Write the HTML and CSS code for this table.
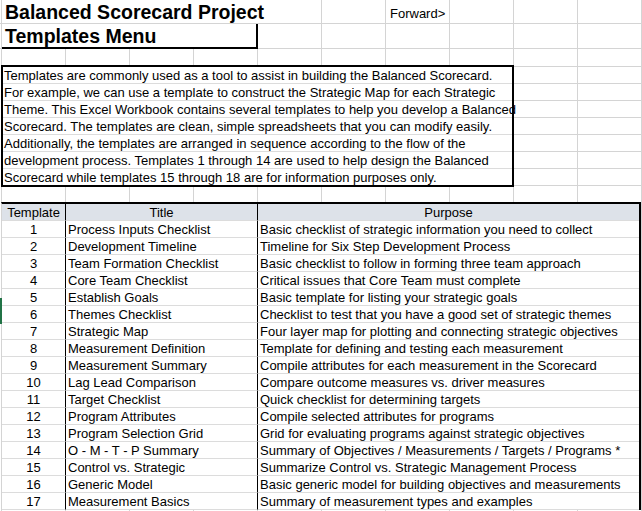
FILE: index.html
```html
<!DOCTYPE html>
<html>
<head>
<meta charset="utf-8">
<link rel="stylesheet" href="styles.css">
</head>
<body>
<div class="sheet">
  <div class="row r1">
    <div class="title-cell">Balanced Scorecard Project</div>
    <div class="fwd">Forward&gt;</div>
  </div>
  <div class="row r2">
    <div class="menu-cell">Templates Menu</div>
  </div>
  <div class="row r3"></div>
  <div class="intro">
    <div class="box">
      <div class="line">Templates are commonly used as a tool to assist in building the Balanced Scorecard.</div>
      <div class="line">For example, we can use a template to construct the Strategic Map for each Strategic</div>
      <div class="line">Theme. This Excel Workbook contains several templates to help you develop a Balanced</div>
      <div class="line">Scorecard. The templates are clean, simple spreadsheets that you can modify easily.</div>
      <div class="line">Additionally, the templates are arranged in sequence according to the flow of the</div>
      <div class="line">development process. Templates 1 through 14 are used to help design the Balanced</div>
      <div class="line">Scorecard while templates 15 through 18 are for information purposes only.</div>
    </div>
    <div class="side"></div>
  </div>
  <div class="row blank"></div>
  <div class="table">
    <div class="c num head">Template</div><div class="c ttl head">Title</div><div class="c pur head">Purpose</div>
    <div class="c num">1</div><div class="c ttl">Process Inputs Checklist</div><div class="c pur">Basic checklist of strategic information you need to collect</div>
    <div class="c num">2</div><div class="c ttl">Development Timeline</div><div class="c pur">Timeline for Six Step Development Process</div>
    <div class="c num">3</div><div class="c ttl">Team Formation Checklist</div><div class="c pur">Basic checklist to follow in forming three team approach</div>
    <div class="c num">4</div><div class="c ttl">Core Team Checklist</div><div class="c pur">Critical issues that Core Team must complete</div>
    <div class="c num">5</div><div class="c ttl">Establish Goals</div><div class="c pur">Basic template for listing your strategic goals</div>
    <div class="c num">6</div><div class="c ttl">Themes Checklist</div><div class="c pur">Checklist to test that you have a good set of strategic themes</div>
    <div class="c num">7</div><div class="c ttl">Strategic Map</div><div class="c pur">Four layer map for plotting and connecting strategic objectives</div>
    <div class="c num">8</div><div class="c ttl">Measurement Definition</div><div class="c pur">Template for defining and testing each measurement</div>
    <div class="c num">9</div><div class="c ttl">Measurement Summary</div><div class="c pur">Compile attributes for each measurement in the Scorecard</div>
    <div class="c num">10</div><div class="c ttl">Lag Lead Comparison</div><div class="c pur">Compare outcome measures vs. driver measures</div>
    <div class="c num">11</div><div class="c ttl">Target Checklist</div><div class="c pur">Quick checklist for determining targets</div>
    <div class="c num">12</div><div class="c ttl">Program Attributes</div><div class="c pur">Compile selected attributes for programs</div>
    <div class="c num">13</div><div class="c ttl">Program Selection Grid</div><div class="c pur">Grid for evaluating programs against strategic objectives</div>
    <div class="c num">14</div><div class="c ttl">O - M - T - P Summary</div><div class="c pur">Summary of Objectives / Measurements / Targets / Programs *</div>
    <div class="c num">15</div><div class="c ttl">Control vs. Strategic</div><div class="c pur">Summarize Control vs. Strategic Management Process</div>
    <div class="c num">16</div><div class="c ttl">Generic Model</div><div class="c pur">Basic generic model for building objectives and measurements</div>
    <div class="c num">17</div><div class="c ttl">Measurement Basics</div><div class="c pur">Summary of measurement types and examples</div>
  </div>
  <div class="row-marker"></div>
</div>
</body>
</html>
```
FILE: styles.css
```css
html, body {
  margin: 0;
  padding: 0;
  background: #fff;
}
body {
  font-family: "Liberation Sans", Arial, sans-serif;
  font-size: 13px;
  color: #000;
  overflow: hidden;
}
.sheet {
  position: relative;
  width: 642px;
  height: 511px;
  overflow: hidden;
  background-color: #fff;
  background-image: linear-gradient(to right, #d4d4d4 1px, transparent 1px);
  background-size: 64px 100%;
  background-position: 1px 0;
}
.row {
  display: flex;
  box-sizing: border-box;
  border-bottom: 1px solid #d4d4d4;
}
.r1 {
  height: 24px;
}
.title-cell {
  margin-left: 2px;
  width: 319px;
  height: 23px;
  background: #fff;
  font-weight: bold;
  font-size: 19.5px;
  line-height: 25px;
  padding-left: 3px;
  box-sizing: border-box;
  white-space: nowrap;
  overflow: hidden;
}
.fwd {
  margin-left: 67px;
  padding-left: 2px;
  padding-top: 3px;
  box-sizing: border-box;
  line-height: 21px;
  background: #fff;
  width: 60px;
  height: 23px;
}
.r2 {
  height: 25px;
}
.menu-cell {
  margin-left: 2px;
  width: 256px;
  height: 25px;
  box-sizing: border-box;
  background: #fff;
  border-bottom: 2px solid #000;
  border-right: 2px solid #000;
  font-weight: bold;
  font-size: 19.5px;
  line-height: 25px;
  padding-left: 3px;
  white-space: nowrap;
  overflow: hidden;
}
.r3 {
  height: 16px;
  border-bottom: none;
}
.intro {
  display: flex;
  height: 122px;
}
.box {
  margin-left: 1px;
  width: 513px;
  box-sizing: border-box;
  border: 2px solid #000;
  background: #fff;
}
.line {
  height: 17px;
  box-sizing: border-box;
  border-bottom: 1px solid #dcdcdc;
  line-height: 18px;
  padding-left: 1px;
  white-space: nowrap;
}
.line:last-child {
  border-bottom: none;
  height: 16px;
}
.side {
  flex: 1;
  background-image: linear-gradient(to bottom, #d4d4d4 1px, transparent 1px);
  background-size: 100% 17px;
  background-position: 0 1px;
}
.blank {
  height: 15px;
  border-bottom: none;
}
.table {
  display: grid;
  grid-template-columns: 64px 192px 1fr;
  grid-auto-rows: 17px;
  margin-left: 1px;
  width: 640px;
  box-sizing: border-box;
  border-top: 2px solid #000;
  border-left: 1px solid #d4d4d4;
  border-right: 2px solid #000;
  background: #fff;
}
.c {
  box-sizing: border-box;
  border-bottom: 1px solid #dcdcdc;
  line-height: 18px;
  white-space: nowrap;
  overflow: hidden;
}
.num {
  text-align: center;
  border-right: 1px solid #000;
}
.ttl {
  border-right: 1px solid #000;
  padding-left: 2px;
}
.pur {
  padding-left: 2px;
}
.head {
  background: #dde2e9;
  text-align: center;
  padding-left: 0;
}
.row-marker {
  position: absolute;
  left: 0;
  top: 298px;
  width: 2px;
  height: 26px;
  background: #217346;
}
```
